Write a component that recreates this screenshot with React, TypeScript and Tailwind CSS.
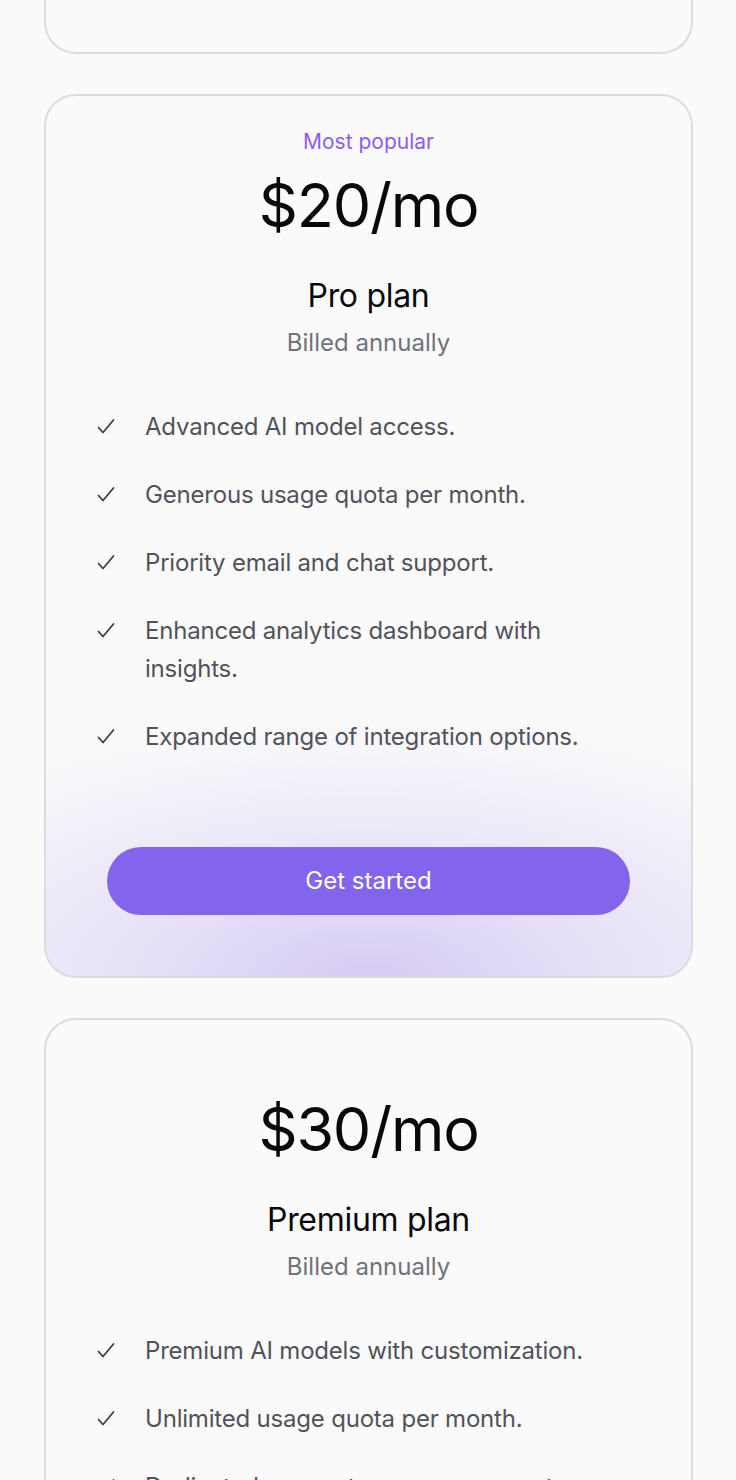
import React from 'react';

type Plan = {
  price: string;
  name: string;
  popular?: boolean;
  features: string[];
};

const plans: Plan[] = [
  {
    price: '$20/mo',
    name: 'Pro plan',
    popular: true,
    features: [
      'Advanced AI model access.',
      'Generous usage quota per month.',
      'Priority email and chat support.',
      'Enhanced analytics dashboard with insights.',
      'Expanded range of integration options.',
    ],
  },
  {
    price: '$30/mo',
    name: 'Premium plan',
    features: [
      'Premium AI models with customization.',
      'Unlimited usage quota per month.',
      'Dedicated account manager support.',
      'Custom analytics and reporting tools.',
      'Full access to all integrations.',
    ],
  },
];

const CheckIcon = () => (
  <svg width="18" height="18" viewBox="0 0 18 18" fill="none" className="shrink-0 text-[#3f3f46]">
    <path d="M1.5 9.5 L6 14.5 L16.5 2" stroke="currentColor" strokeWidth="1.8" strokeLinecap="round" strokeLinejoin="round" />
  </svg>
);

const PlanCard: React.FC<{ plan: Plan }> = ({ plan }) => (
  <div
    className={
      'relative overflow-hidden rounded-[32px] border-2 border-[#dcdce0] px-[51px] pt-[32px] pb-[61px] ' +
      (plan.popular
        ? 'bg-[radial-gradient(ellipse_600px_260px_at_50%_100%,#d6ccf4_0%,#e9e4f8_45%,#fafafa_100%)]'
        : 'bg-[#fafafa]')
    }
  >
    <p className={'text-center text-[21px] leading-[28px] text-[#8b5cf6] ' + (plan.popular ? '' : 'invisible')}>
      Most popular
    </p>
    <h2 className="mt-[17px] text-center text-[61px] leading-[64px] font-normal tracking-[-1.2px] text-[#09090b]">
      {plan.price}
    </h2>
    <h3 className="mt-[40px] text-center text-[32px] leading-[38px] font-normal tracking-[-0.3px] text-[#09090b]">
      {plan.name}
    </h3>
    <p className="mt-[13px] text-center text-[24px] leading-[30px] text-[#71717a]">Billed annually</p>
    <ul className="mt-[50px] flex flex-col gap-[30px]">
      {plan.features.map(f => (
        <li key={f} className="flex items-start gap-[30px]">
          <span className="flex h-[38px] items-center">
            <CheckIcon />
          </span>
          <span className="text-[24px] leading-[38px] text-[#52525b] tracking-[-0.2px]">{f}</span>
        </li>
      ))}
    </ul>
    <div className="mt-[91px] px-[10px]">
      <button
        type="button"
        className="h-[68px] w-full rounded-full bg-[#8364ec] text-[24px] text-white"
      >
        Get started
      </button>
    </div>
  </div>
);

const App: React.FC = () => {
  return (
    <div className="min-h-[1480px] bg-[#fafafa] pl-[44px] pr-[43px] font-['Inter',sans-serif]">
      <div className="flex flex-col gap-[40px]">
        {/* bottom of the previous card, scrolled past */}
        <div className="h-[54px] rounded-b-[32px] border-2 border-t-0 border-[#dcdce0]" />
        {plans.map(p => (
          <PlanCard key={p.name} plan={p} />
        ))}
      </div>
    </div>
  );
};

export default App;
